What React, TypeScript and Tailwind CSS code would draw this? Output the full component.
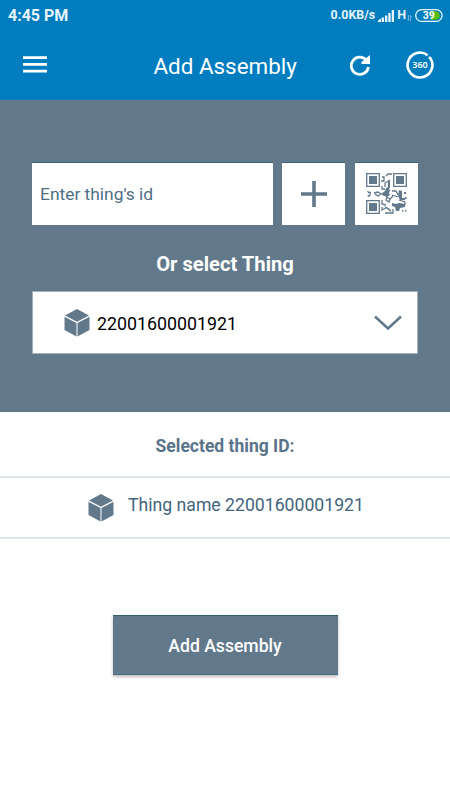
import type { ReactNode } from "react";

const THING_ID = "22001600001921";

function StatusBar() {
  return (
    <div className="flex h-[31px] items-center justify-between pl-2 pr-[7px] text-[#e8f4fc]">
      <span className="text-[16px] font-bold leading-none">4:45 PM</span>
      <div className="flex items-center">
        <span className="text-[12.400px] font-bold leading-none">0.0KB/s</span>
        <svg className="ml-[3px]" width="17" height="12" viewBox="0 0 17 12" fill="currentColor">
          <path d="M0 10.500l3-2V12H0zM3.700 7.500h2.300V12H3.700zM7 5.500h2.300V12H7zM10.300 3h2.300v9h-2.300z" />
          <path d="M13.700 0H16v12h-2.300z" />
        </svg>
        <span className="ml-[2px] text-[12.500px] font-bold leading-none">H</span>
        <svg className="ml-px mt-1" width="5" height="6" viewBox="0 0 5 6" fill="none" stroke="currentColor" strokeWidth="0.800" opacity="0.600">
          <path d="M1.500 0v5.500L0.300 4.300M3.500 6V0.500l1.200 1.200" />
        </svg>
        <svg className="ml-[3px]" width="28" height="13" viewBox="0 0 28 13">
          <path d="M16 2.200h4.500a4.300 4.300 0 0 1 0 8.600H16z" fill="#57bd10" />
          <rect x="0.700" y="0.700" width="26.400" height="11.600" rx="5.800" fill="none" stroke="#e8f4fc" strokeWidth="1.300" />
          <text x="13.700" y="10.200" fill="#fff" fontSize="10.500" fontWeight="700" textAnchor="middle">
            39
          </text>
        </svg>
      </div>
    </div>
  );
}

function MenuIcon() {
  return (
    <svg width="24" height="17" viewBox="0 0 24 17" fill="#fff">
      <path d="M0 0.200h24v2.800H0zM0 7h24v2.800H0zM0 13.800h24v2.800H0z" />
    </svg>
  );
}

function RefreshIcon() {
  return (
    <svg width="20" height="21" viewBox="0 0 20 21">
      <path d="M16.500 5.300A8.600 8.600 0 1 0 18.400 12" fill="none" stroke="#fff" strokeWidth="2.800" />
      <path d="M20 0v9h-8.500V7z" fill="#fff" />
    </svg>
  );
}

function View360Icon() {
  return (
    <svg width="28" height="28" viewBox="0 0 28 28">
      <path d="M21.600 4.200A12.400 12.400 0 1 0 24.500 7.400" fill="none" stroke="#fff" strokeWidth="2.600" />
      <path d="M22.300 7.400l.600-1.800 2.200.200.600 1.800-1.700.800z" fill="#fff" />
      <text x="14" y="17.400" fill="#fff" fontSize="9" fontWeight="600" textAnchor="middle" fontFamily="Noto Sans, sans-serif">
        360
      </text>
    </svg>
  );
}

function CubeIcon() {
  return (
    <svg className="shrink-0" width="26" height="28" viewBox="0 0 26 28" fill="#62798c">
      <path d="M13 0l12 6.400-12 6.300L1 6.400z" />
      <path d="M0.500 7.700l12 6.300v13.600l-12-6.500zM25.500 7.700l-12 6.300v13.600l12-6.500z" />
    </svg>
  );
}

function QrIcon() {
  return (
    <svg width="41" height="41" viewBox="0 0 41 41" fill="none" stroke="#62798c">
      <g strokeWidth="1.300">
        <path d="M.700.700h12.600v12.600H.700zM27.700.700h12.600v12.600H27.700zM.700 27.700h12.600v12.600H.700z" />
      </g>
      <g fill="#62798c" stroke="none">
        <path d="M3 3h8v8H3zM30 3h8v8h-8zM3 30h8v8H3z" />
        <path d="M15 21l4-3 1-3 2-1 2 3-1 3 1 2-3 2-3-1zM22 8h2v7h-2zM33 17l3 1v7h3v2h-5l-2-4zM26 30l4 1 3-1 6 1v3l-5 1-1 3h-3l-1-4-3-1zM38 19h2v2h-2zM39 24h1.500v2H39zM36 37h1.500v1.500H36zM39 37h1.500v1.500H39zM1 18l4 1v2l-3-1zM1 23l3-2 1 1-2 2zM18 33l3 1 4 3v2l-4-3z" />
      </g>
      <path
        strokeWidth="1.300"
        d="M26 1h-4l-2 2M16 4h2v4h-3M24 7l-5 3v4M16 13v3h3M8 20l4-1 3 2-3 2-3-2M21 24l3 2-1 3-3-2zM26 18h4l2 4M26 22l6 2M24 26l3-3M16 27v4l4 1M16 34v3l4-2M19 40h8v-4M33 27l6 2v3"
      />
    </svg>
  );
}

function Tile({ label, children }: { label: string; children: ReactNode }) {
  return (
    <button
      aria-label={label}
      className="flex h-[63px] w-[63px] shrink-0 items-center justify-center border-t border-[#3b6278] bg-white"
    >
      {children}
    </button>
  );
}

export default function App() {
  return (
    <div className="flex h-[800px] w-[450px] flex-col bg-white font-['Roboto',sans-serif]">
      <header className="h-[100px] bg-[#007dbf]">
        <StatusBar />
        <div className="flex h-[69px] items-center pl-[23px] pr-4">
          <button aria-label="Menu" className="pb-0.5">
            <MenuIcon />
          </button>
          <h1 className="ml-[106.500px] mt-0.5 w-[143px] whitespace-nowrap text-[22.400px] leading-none text-white">
            Add Assembly
          </h1>
          <button aria-label="Refresh" className="ml-[53.500px] pb-px">
            <RefreshIcon />
          </button>
          <button aria-label="360 view" className="ml-auto pb-px">
            <View360Icon />
          </button>
        </div>
      </header>

      <section className="h-[312px] bg-[#62798c] px-8 pt-[61.500px]">
        <div className="flex gap-[9.500px]">
          <input
            placeholder="Enter thing's id"
            className="h-[63px] w-[240.500px] border-t border-[#3b6278] bg-white px-2 text-[17.400px] outline-none placeholder:text-[#4f6e84] placeholder:opacity-100"
          />
          <Tile label="Add thing">
            <svg width="26" height="26" viewBox="0 0 26 26" fill="#62798c">
              <path d="M11.200 0h3.600v11.200H26v3.600H14.800V26h-3.600V14.800H0v-3.600h11.200z" />
            </svg>
          </Tile>
          <Tile label="Scan QR code">
            <QrIcon />
          </Tile>
        </div>

        <h2 className="mt-[27px] text-center text-[20.200px] font-bold leading-6 text-white">Or select Thing</h2>

        <button className="mt-[15.500px] flex h-[63px] w-[386px] items-center border border-[#a0aeb9] bg-white pl-[31px] pr-[15px]">
          <CubeIcon />
          <span className="ml-[7px] mt-[2px] text-[17.800px] leading-none text-black">{THING_ID}</span>
          <svg className="ml-auto" width="28" height="16" viewBox="0 0 28 16" fill="none" stroke="#62798c" strokeWidth="2.600">
            <path d="M1 1.500l13 12 13-12" />
          </svg>
        </button>
      </section>

      <h3 className="flex h-[66px] items-center justify-center border-b-2 border-[#dfe5ea] pt-1 text-[17.500px] font-bold text-[#587389]">
        Selected thing ID:
      </h3>
      <div className="flex h-[61px] items-center border-b-2 border-[#dfe5ea] pl-[88px] pt-px">
        <CubeIcon />
        <span className="mb-[4px] ml-[14px] text-[17.650px] leading-none text-[#3f647c]">Thing name {THING_ID}</span>
      </div>

      <button className="mx-auto mt-[76px] h-[60px] w-[225px] border-y border-t-[#315f70] border-b-[#466c84] bg-[#62798c] pt-0.5 text-[17.600px] font-medium text-white shadow-[0_2px_3px_rgba(0,0,0,0.25)]">
        Add Assembly
      </button>
    </div>
  );
}
